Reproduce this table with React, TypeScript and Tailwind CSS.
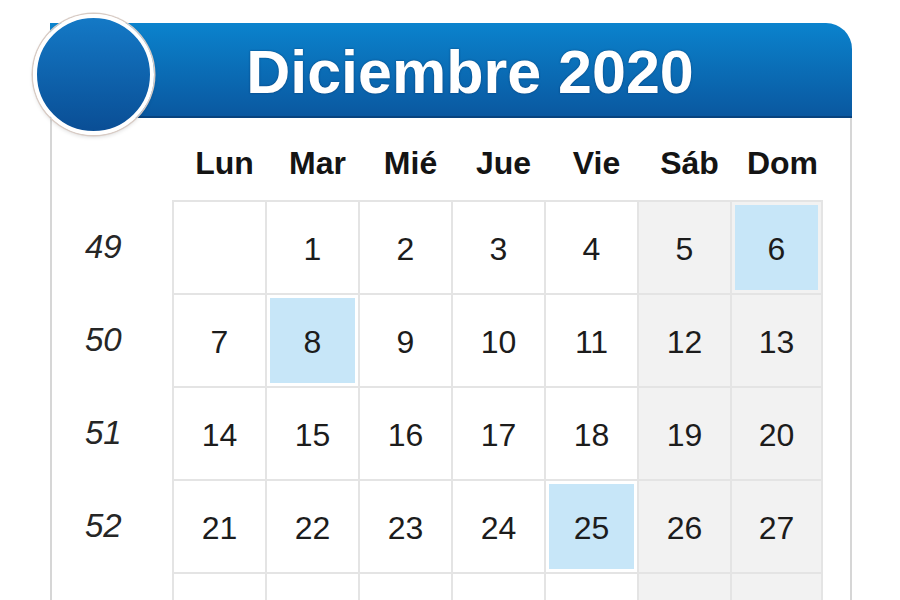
const days = ["Lun", "Mar", "Mié", "Jue", "Vie", "Sáb", "Dom"];

const weeks: { num: number | null; days: (number | null)[] }[] = [
  { num: 49, days: [null, 1, 2, 3, 4, 5, 6] },
  { num: 50, days: [7, 8, 9, 10, 11, 12, 13] },
  { num: 51, days: [14, 15, 16, 17, 18, 19, 20] },
  { num: 52, days: [21, 22, 23, 24, 25, 26, 27] },
  // la última fila queda cortada por el borde inferior
  { num: null, days: [null, null, null, null, null, null, null] },
];

// días marcados en azul
const highlighted = [6, 8, 25];

const App = () => {
  return (
    <div className="relative h-[600px] w-[900px] overflow-hidden bg-white font-['Liberation_Sans',Arial,sans-serif]">
      <div className="ml-[50px] mt-[23px] w-[802px]">
        {/* cabecera */}
        <div className="flex h-[95px] items-center justify-center rounded-tr-[26px] border-b-2 border-[#08437e] bg-gradient-to-b from-[#0b83cd] to-[#0a58a0] pl-[38px] pt-[6px]">
          <h1 className="text-[61px] font-bold leading-none text-white [text-shadow:0_0_2px_rgba(0,30,70,0.6)]">
            Diciembre 2020
          </h1>
        </div>

        <div className="border-x-2 border-[#d6d6d6] pr-[27px]">
          <div className="grid grid-cols-[120px_repeat(7,93px)]">
            <div className="h-[82px]" />
            {days.map((d) => (
              <div
                key={d}
                className="flex h-[82px] items-center justify-center pl-[12px] pt-[8px] text-[32px] font-bold text-[#141414]"
              >
                {d}
              </div>
            ))}

            {weeks.map((w, wi) => (
              <div key={wi} className="contents">
                <div className="flex h-[93px] items-center pl-[33px] text-[33px] italic text-[#262626]">
                  {w.num}
                </div>
                {w.days.map((n, i) => {
                  const weekend = i >= 5;
                  const hl = n !== null && highlighted.includes(n);
                  return (
                    <div
                      key={i}
                      className={
                        "h-[93px] border-l-2 border-t-2 border-[#e4e4e4] p-[3px] " +
                        (weekend ? "bg-[#f2f2f2] " : "bg-white ") +
                        (i === 6 ? "border-r-2" : "")
                      }
                    >
                      <div
                        className={
                          "flex h-full w-full items-center justify-center pt-[2px] text-[32px] text-[#1c1c1c] " +
                          (hl ? "bg-[#c7e6f8]" : "")
                        }
                      >
                        {n}
                      </div>
                    </div>
                  );
                })}
              </div>
            ))}
          </div>
        </div>
      </div>

      {/* círculo sobre la cabecera */}
      <div className="absolute left-[33px] top-[14px] h-[121px] w-[121px] rounded-full border-4 border-white bg-gradient-to-b from-[#1479c6] to-[#0a4e95] shadow-[0_0_0_1.5px_#d8cbc4,0_2px_4px_rgba(0,0,0,0.15)]" />
    </div>
  );
};

export default App;
